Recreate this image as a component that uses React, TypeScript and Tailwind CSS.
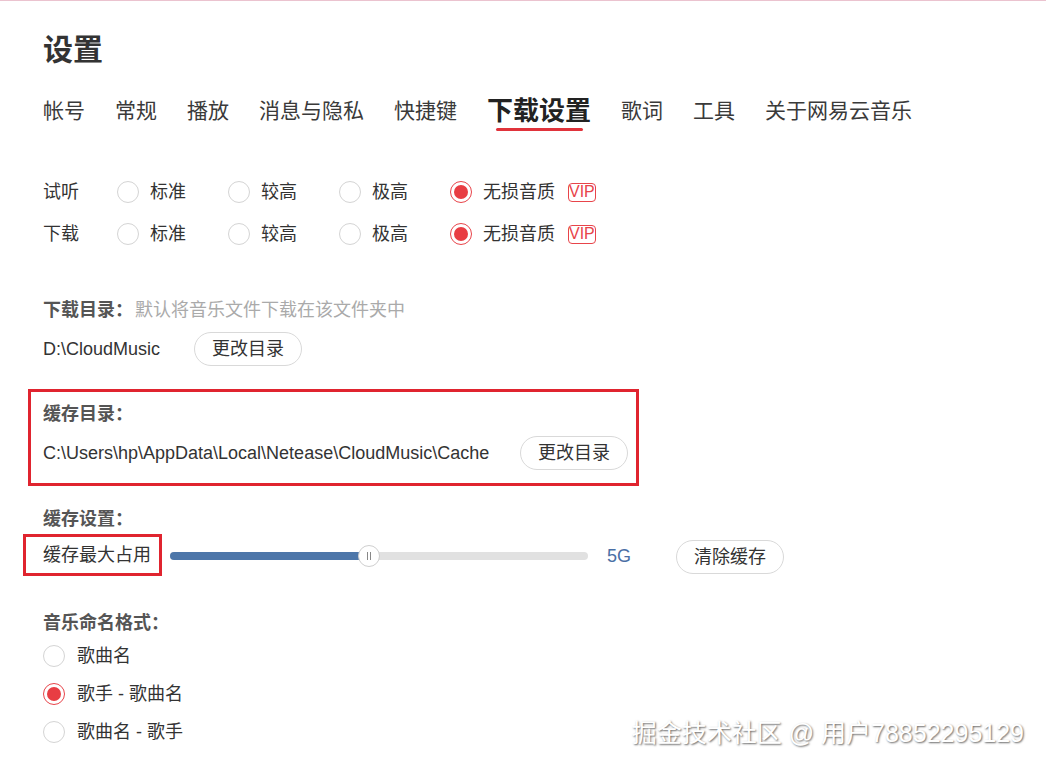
import React from 'react';

const cn = '"Liberation Sans", "Noto Sans CJK SC", sans-serif';

const tabs = ['帐号', '常规', '播放', '消息与隐私', '快捷键', '下载设置', '歌词', '工具', '关于网易云音乐'];
const levels = ['标准', '较高', '极高', '无损音质'];

const Radio = ({ checked }: { checked?: boolean }) =>
  checked ? (
    <span className="flex h-[22px] w-[22px] shrink-0 items-center justify-center rounded-full border-[1.5px] border-[#e8444a] bg-white">
      <span className="h-[14px] w-[14px] rounded-full bg-[#e83d43]" />
    </span>
  ) : (
    <span className="h-[22px] w-[22px] shrink-0 rounded-full border border-[#d4d4d4] bg-white" />
  );

const Vip = () => (
  <span className="ml-[13px] flex h-[19px] w-[33px] items-center justify-center rounded-[4px] border-[1.5px] border-[#e8444a] text-[16px] leading-none text-[#e8444a]">
    VIP
  </span>
);

const PillButton = ({ children }: { children: React.ReactNode }) => (
  <button className="flex h-[34px] w-[108px] items-center justify-center rounded-full border border-[#d9d9d9] bg-white text-[18px] text-[#333]">
    {children}
  </button>
);

const QualityRow = ({ label }: { label: string }) => (
  <div className="flex h-[42px] items-center text-[18px] text-[#333]">
    <span className="w-[74px]">{label}</span>
    {levels.map((lv, i) => (
      <div key={lv} className="flex w-[111px] items-center">
        <Radio checked={i === 3} />
        <span className="ml-[11px] whitespace-nowrap">{lv}</span>
        {i === 3 && <Vip />}
      </div>
    ))}
  </div>
);

const SectionLabel = ({ children, h = 30 }: { children: React.ReactNode; h?: number }) => (
  <div
    className={`flex items-center text-[18px] font-bold text-[#555] ${h === 30 ? 'h-[30px]' : 'h-[28px]'}`}
  >
    {children}
  </div>
);

export default function App() {
  return (
    <div className="relative h-[771px] w-[1046px] overflow-hidden bg-white" style={{ fontFamily: cn }}>
      <div className="h-[1px] bg-[#ebc3cf]" />
      <div className="pl-[43px]">
        {/* Title */}
        <h1 className="mt-[29px] h-[40px] text-[30px] font-bold leading-[40px] text-[#333]">设置</h1>

        {/* Tabs */}
        <div className="mt-[26px] flex items-start gap-[30px]">
          {tabs.map((t) =>
            t === '下载设置' ? (
              <div key={t} className="flex flex-col items-center">
                <span className="h-[30px] text-[26px] font-bold leading-[30px] text-[#222]">{t}</span>
                <span className="mt-[2px] h-[3px] w-[87px] rounded-full bg-[#e0333b]" />
              </div>
            ) : (
              <span key={t} className="h-[30px] text-[21px] leading-[30px] text-[#3a3a3a]">
                {t}
              </span>
            )
          )}
        </div>

        {/* Quality */}
        <div className="mt-[40px]">
          <QualityRow label="试听" />
          <QualityRow label="下载" />
        </div>

        {/* Download dir */}
        <div className="mt-[40px]">
          <SectionLabel>
            下载目录：<span className="ml-[2px] font-normal text-[#aaa]">默认将音乐文件下载在该文件夹中</span>
          </SectionLabel>
          <div className="mt-[7px] flex h-[34px] items-center text-[18px] text-[#333]">
            <span>D:\CloudMusic</span>
            <span className="ml-[34px]">
              <PillButton>更改目录</PillButton>
            </span>
          </div>
        </div>

        {/* Cache dir */}
        <div className="-ml-[15px] mt-[23px] w-[611px] border-[3px] border-[#e0242f] pb-[13px] pl-[12px] pt-[7px]">
          <SectionLabel>缓存目录：</SectionLabel>
          <div className="mt-[7px] flex h-[34px] items-center text-[18px] text-[#333]">
            <span className="w-[477px] whitespace-nowrap">C:\Users\hp\AppData\Local\Netease\CloudMusic\Cache</span>
            <PillButton>更改目录</PillButton>
          </div>
        </div>

        {/* Cache settings */}
        <div className="mt-[18px]">
          <SectionLabel>缓存设置：</SectionLabel>
          <div className="flex h-[42px] items-center">
            <div className="-ml-[20px] flex h-[42px] items-center border-[3px] border-[#e0242f] pl-[17px] pr-[8px] text-[18px] text-[#333]">
              缓存最大占用
            </div>
            <div className="relative ml-[8px] mt-[2px] h-[8px] w-[418px] rounded-full bg-[#e1e1e1]">
              <div className="h-full w-[199px] rounded-full bg-[#4d76a9]" />
              <div className="absolute left-[188px] top-[-7px] flex h-[22px] w-[22px] items-center justify-center gap-[2px] rounded-full border border-[#cfcfcf] bg-white">
                <span className="h-[8px] w-[1px] bg-[#888]" />
                <span className="h-[8px] w-[1px] bg-[#888]" />
              </div>
            </div>
            <span className="ml-[19px] mt-[2px] w-[25px] text-[18px] text-[#4a6fa5]">5G</span>
            <span className="ml-[44px] mt-[4px]">
              <PillButton>清除缓存</PillButton>
            </span>
          </div>
        </div>

        {/* Naming format */}
        <div className="mt-[33px]">
          <SectionLabel h={28}>音乐命名格式：</SectionLabel>
          {['歌曲名', '歌手 - 歌曲名', '歌曲名 - 歌手'].map((o, i) => (
            <div key={o} className="flex h-[38px] items-center text-[18px] text-[#333]">
              <Radio checked={i === 1} />
              <span className="ml-[12px]">{o}</span>
            </div>
          ))}
        </div>
      </div>

      {/* watermark */}
      <div className="absolute bottom-[19px] right-[22px] text-[25px] text-white [text-shadow:1px_1px_2px_rgba(0,0,0,0.6)]">
        掘金技术社区 @ 用户78852295129
      </div>
    </div>
  );
}
